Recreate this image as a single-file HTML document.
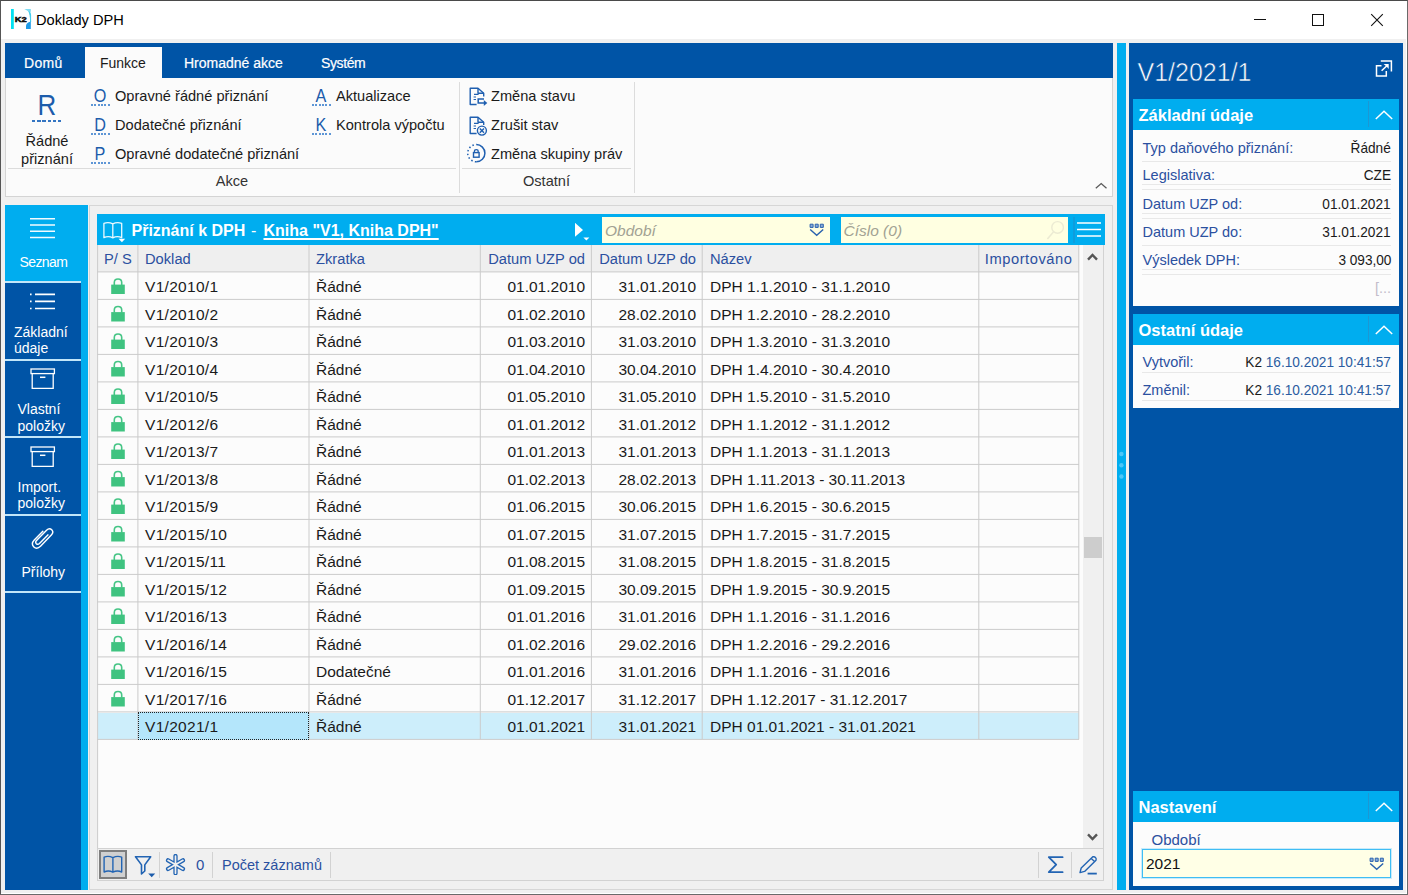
<!DOCTYPE html>
<html lang="cs">
<head>
<meta charset="utf-8">
<title>Doklady DPH</title>
<style>
*{box-sizing:border-box;margin:0;padding:0}
html,body{width:1408px;height:895px;overflow:hidden;background:#f0f0f0}
body{font-family:"Liberation Sans",sans-serif;font-size:15px;color:#1a1a1a;position:relative}
.a{position:absolute}
.t{position:absolute;white-space:nowrap;line-height:20px;height:20px}
.rt{text-align:right}
.ct{text-align:center}
#win{position:absolute;left:0;top:0;width:1408px;height:895px;background:#f0f0f0;border-left:1px solid #555;border-top:1px solid #4a4a4a;border-right:1px solid #6a6a6a;border-bottom:1px solid #6a6a6a;box-shadow:inset -1px -1px 0 #fff}
#titlebar{position:absolute;left:1px;top:1px;width:1406px;height:38px;background:#fff}
#tabbar{position:absolute;left:5px;top:43px;width:1108px;height:35px;background:#0054a6}
#tabact{position:absolute;left:85px;top:47px;width:77px;height:31px;background:#fbfbfb}
#ribbon{position:absolute;left:5px;top:78px;width:1108px;height:119px;background:#fbfbfb;border:1px solid #d4d4d4;border-top:none}
.tab{color:#fff;font-size:14px;-webkit-text-stroke:.2px #fff}
.rb{font-size:14.6px;color:#1a1a1a}
.rk{font-size:18px;color:#1c5cab;transform:scaleX(.9)}
.dots{position:absolute;height:2px;background-image:repeating-linear-gradient(90deg,#5e96d6 0 2.100px,transparent 2.100px 3.320px)}
#nav{position:absolute;left:5px;top:205px;width:83px;height:685px;background:#00adef}
.nb{position:absolute;left:5px;width:76px;background:#0054a6}
.nd{position:absolute;left:5px;width:76px;height:2px;background:#c2e6f9}
.nt{position:absolute;color:#fff;font-size:14px;line-height:16px;white-space:nowrap}
#main{position:absolute;left:89px;top:205px;width:1024px;height:685px;background:#f0f0f0;border:1px solid #d6d6d6}
#ghead{position:absolute;left:97px;top:214px;width:1008px;height:31px;background:#00adef}
#gcols{position:absolute;left:97px;top:245px;width:982px;height:27px;background:#efefef}
#gbody{position:absolute;left:97px;top:272px;width:986px;height:576px;background:#fcfcfc}
.vl{position:absolute;width:1px;background:#d6d6d6}
.hl{position:absolute;height:1px;background:#d6d6d6;left:97px;width:982px}
.ch{font-size:14.7px;color:#2b50a0}
.c{font-size:15.5px;color:#1a1a1a;z-index:4}
#rp{position:absolute;left:1129px;top:43px;width:274px;height:847px;background:#0054a6}
.sh{position:absolute;left:1133px;width:266px;height:31px;background:#00adef}
.sb{position:absolute;left:1133px;width:266px;background:#fcfcfc}
.sht{color:#fff;font-weight:bold;font-size:16.5px}
.lbl{font-size:14.5px;color:#2b50a0}
.val{font-size:14.5px;color:#1a1a1a;transform:scaleX(.94);transform-origin:100% 50%}
.rl{position:absolute;left:1142px;width:249px;height:1px;background:#e8e8e8}
.hs{position:absolute;width:1px;height:26px;background:#1c97d4}
</style>
</head>
<body>
<div id="win"></div><div id="titlebar"></div>
<svg class="a" style="left:11px;top:9px" width="21" height="21" viewBox="0 0 21 21">
<rect x="0" y="0" width="2.800" height="20" fill="#03e0f1"/>
<path d="M13.400 0 H19.800 V3 Q17 2.600 13.400 0Z" fill="#7fdcf3"/>
<path d="M17.800 2.200 Q19.600 3.400 19.600 6 V13 Q19.600 9 19 6.500 Q18.600 4 17.800 2.200Z" fill="#35c9ec" stroke="#35c9ec" stroke-width=".8"/>
<path d="M19.800 12.500 V20 H15 V17 Q15 13.800 19.800 12.500Z" fill="#1f9be8"/>
<text x="3.700" y="12.600" font-family="Liberation Sans" font-weight="bold" font-size="7.800" fill="#0a0a0a" stroke="#0a0a0a" stroke-width=".5" textLength="12" lengthAdjust="spacingAndGlyphs">K2</text>
</svg>
<div class="t " style="left:36.4px;top:10px;font-size:15px;color:#000;transform:scaleX(.975);transform-origin:0 50%">Doklady DPH</div>
<div class="a" style="left:1254px;top:19px;width:12px;height:1px;background:#111"></div>
<div class="a" style="left:1312px;top:14px;width:12px;height:12px;border:1px solid #111"></div>
<svg class="a" style="left:1370px;top:13px" width="14" height="14" viewBox="0 0 14 14"><path d="M1.200 1.200 L12.800 12.800 M12.800 1.200 L1.200 12.800" stroke="#111" stroke-width="1.1" fill="none"/></svg>
<div id="tabbar"></div><div id="tabact"></div><div id="ribbon"></div>
<div class="t tab" style="left:24px;top:53px;letter-spacing:.3px">Domů</div>
<div class="t tab" style="left:100px;top:53px;color:#1a1a1a;-webkit-text-stroke:0">Funkce</div>
<div class="t tab" style="left:184px;top:53px;">Hromadné akce</div>
<div class="t tab" style="left:321px;top:53px;letter-spacing:-.4px">Systém</div>
<div class="t " style="left:22px;top:90px;left:0;width:94px;text-align:center;font-size:29.5px;color:#1c5cab;line-height:30px;height:30px;transform:scaleX(.88)">R</div>
<div class="dots" style="left:32px;top:120px;width:30px;background-image:repeating-linear-gradient(90deg,#3475c2 0 3.500px,transparent 3.500px 5.200px)"></div>
<div class="t rb ct" style="left:0px;top:130.5px;width:94px">Řádné</div>
<div class="t rb ct" style="left:0px;top:148.5px;width:94px">přiznání</div>
<div class="t rk ct" style="left:91px;top:86px;width:18px">O</div>
<div class="dots" style="left:91px;top:104px;width:18.700px"></div>
<div class="t rb" style="left:115px;top:86px;">Opravné řádné přiznání</div>
<div class="t rk ct" style="left:91px;top:115px;width:18px">D</div>
<div class="dots" style="left:91px;top:133px;width:18.700px"></div>
<div class="t rb" style="left:115px;top:115px;">Dodatečné přiznání</div>
<div class="t rk ct" style="left:91px;top:143.5px;width:18px">P</div>
<div class="dots" style="left:91px;top:162px;width:18.700px"></div>
<div class="t rb" style="left:115px;top:143.5px;">Opravné dodatečné přiznání</div>
<div class="t rk ct" style="left:312px;top:86px;width:18px">A</div>
<div class="dots" style="left:312px;top:104px;width:18.700px"></div>
<div class="t rb" style="left:336px;top:86px;">Aktualizace</div>
<div class="t rk ct" style="left:312px;top:115px;width:18px">K</div>
<div class="dots" style="left:312px;top:133px;width:18.700px"></div>
<div class="t rb" style="left:336px;top:115px;">Kontrola výpočtu</div>
<div class="t rb" style="left:491px;top:86px;">Změna stavu</div>
<div class="t rb" style="left:491px;top:115px;">Zrušit stav</div>
<div class="t rb" style="left:491px;top:143.5px;">Změna skupiny práv</div>
<svg class="a" style="left:468px;top:86px" width="21" height="22" viewBox="0 0 21 22"><g stroke="#1f5fb0" stroke-width="1.400" fill="none" stroke-linejoin="round"><path d="M8.600 18.500 H2.200 V2.200 H10 L15.700 7.200 V10.500"/><path d="M10 2.200 V7.200 H15.700"/><path d="M6 8.400 H10.600 M5.600 11 H8 M5.600 13.500 H8" stroke-width="1.200"/></g><path d="M16 13 H10.200 V17 H16.500" stroke="#1f5fb0" stroke-width="1.500" fill="none"/><path d="M15.800 13.900 L19.300 17 L15.800 20.100Z" fill="#1f5fb0"/></svg>
<svg class="a" style="left:468px;top:114.500px" width="21" height="22" viewBox="0 0 21 22"><g stroke="#1f5fb0" stroke-width="1.400" fill="none" stroke-linejoin="round"><path d="M8.600 18.500 H2.200 V2.200 H10 L15.700 7.200 V10"/><path d="M10 2.200 V7.200 H15.700"/><path d="M6 8.400 H10.600 M5.600 11 H8 M5.600 13.500 H8" stroke-width="1.200"/></g><circle cx="13.900" cy="15.600" r="4.500" stroke="#1f5fb0" stroke-width="1.400" fill="#fbfbfb"/><path d="M11.800 13.500 L16 17.700 M16 13.500 L11.800 17.700" stroke="#1f5fb0" stroke-width="1.400"/></svg>
<svg class="a" style="left:466px;top:143px" width="21" height="21" viewBox="0 0 21 21"><path d="M10.300 1.600 A8.600 8.600 0 0 1 10.300 18.800" stroke="#1f5fb0" stroke-width="1.500" fill="none"/><path d="M10.300 18.800 A8.600 8.600 0 0 1 10.300 1.600" stroke="#1f5fb0" stroke-width="1.500" fill="none" stroke-dasharray="1.500 2.300"/><path d="M8.400 9.600 V8.400 Q8.400 6.600 10.300 6.600 Q12.200 6.600 12.200 8.400 V9.600" stroke="#1f5fb0" stroke-width="1.300" fill="none"/><rect x="7.500" y="9.600" width="5.600" height="4.600" stroke="#1f5fb0" stroke-width="1.400" fill="none"/></svg>
<div class="a" style="left:8px;top:168px;width:448px;height:1px;background:#dcdcdc"></div>
<div class="a" style="left:462px;top:168px;width:169px;height:1px;background:#dcdcdc"></div>
<div class="a" style="left:459px;top:82px;width:1px;height:111px;background:#dcdcdc"></div>
<div class="a" style="left:634px;top:82px;width:1px;height:111px;background:#dcdcdc"></div>
<div class="t rb ct" style="left:8px;top:171px;width:448px;color:#333">Akce</div>
<div class="t rb ct" style="left:462px;top:171px;width:169px;color:#333">Ostatní</div>
<svg class="a" style="left:1094px;top:181px" width="14" height="9" viewBox="0 0 14 9"><path d="M1.800 7.200 L7.200 2.500 L12.500 7.200" stroke="#5a5a5a" stroke-width="1.300" fill="none"/></svg>
<div id="nav"></div>
<div class="nb" style="top:283px;height:607px"></div>
<div class="nd" style="top:281px"></div>
<div class="nd" style="top:359px"></div>
<div class="nd" style="top:436px"></div>
<div class="nd" style="top:514px"></div>
<div class="nd" style="top:591px"></div>
<svg class="a" style="left:29px;top:216px" width="28" height="24" viewBox="0 0 28 24"><path d="M1 2.800H26M1 9H26M1 15.300H26M1 21.500H26" stroke="#f2fbff" stroke-width="1.400" fill="none"/></svg>
<svg class="a" style="left:29px;top:291px" width="28" height="20" viewBox="0 0 28 20"><path d="M6 3.4H26M6 10.4H26M6 17.5H26" stroke="#fff" stroke-width="1.6" fill="none"/><path d="M1 3.4H2.6M1 10.4H2.6M1 17.5H2.6" stroke="#fff" stroke-width="1.6"/></svg>
<svg class="a" style="left:30px;top:368px" width="26" height="22" viewBox="0 0 26 22"><rect x="1" y="1" width="23.4" height="4.6" stroke="#fff" stroke-width="1.3" fill="none"/><path d="M2.2 5.6V20.3H23.2V5.6" stroke="#fff" stroke-width="1.3" fill="none"/><path d="M10 9.3H15.4" stroke="#fff" stroke-width="1.5"/></svg>
<svg class="a" style="left:30px;top:446px" width="26" height="22" viewBox="0 0 26 22"><rect x="1" y="1" width="23.4" height="4.6" stroke="#fff" stroke-width="1.3" fill="none"/><path d="M2.2 5.6V20.3H23.2V5.6" stroke="#fff" stroke-width="1.3" fill="none"/><path d="M10 9.3H15.4" stroke="#fff" stroke-width="1.5"/></svg>
<svg class="a" style="left:30.500px;top:524.500px" width="23.500" height="26.500" viewBox="0 0 23 25"><path d="M16.5 9.2 L8.3 17.6 Q6.6 19.2 5.2 17.8 Q3.9 16.4 5.4 14.8 L15.2 4.6 Q18 1.9 20.3 4.2 Q22.6 6.6 19.9 9.4 L9.3 20.4 Q5.6 23.9 2.6 20.8 Q-0.2 17.8 3.2 14.2 L11.6 5.6" stroke="#fff" stroke-width="1.4" fill="none" stroke-linecap="round"/></svg>
<div class="nt" style="left:19.500px;top:254px;letter-spacing:-.6px">Seznam</div>
<div class="nt" style="left:14px;top:324px">Základní</div>
<div class="nt" style="left:14px;top:340px">údaje</div>
<div class="nt" style="left:17.5px;top:401px">Vlastní</div>
<div class="nt" style="left:17.5px;top:418px">položky</div>
<div class="nt" style="left:17.5px;top:479px">Import.</div>
<div class="nt" style="left:17.5px;top:495px">položky</div>
<div class="nt" style="left:21.5px;top:564px">Přílohy</div>
<div id="main"></div><div id="ghead"></div><div id="gcols"></div><div id="gbody"></div>
<svg class="a" style="left:102px;top:221px" width="25" height="23" viewBox="0 0 25 23"><path d="M10.800 2.900 Q6.400 0.500 1.900 2.400 V16.700 Q6.400 14.600 10.800 16.900 Q15.200 14.600 19.700 16.700 V2.400 Q15.200 0.500 10.800 2.900 V17.300" stroke="#fff" stroke-opacity=".92" stroke-width="1.300" fill="none" stroke-linejoin="round"/><path d="M16.600 17.800 H23.200 L19.900 21.300Z" fill="#fff"/></svg>
<div class="t " style="left:131.5px;top:221px;font-weight:bold;font-size:16px;color:#fff">Přiznání k DPH</div>
<div class="t " style="left:251px;top:221px;font-size:16px;color:#fff">-</div>
<div class="t " style="left:263.5px;top:221px;font-weight:bold;font-size:16px;color:#fff;text-decoration:underline;text-underline-offset:2px;text-decoration-thickness:1.5px">Kniha "V1, Kniha DPH"</div>
<svg class="a" style="left:574px;top:223px" width="17" height="19" viewBox="0 0 17 19"><path d="M1 -0.200 L9 7 L1 13.700Z" fill="#fff"/><path d="M9.4 14.4 H15.4 L12.4 17.6Z" fill="#fff"/></svg>
<div class="a" style="left:602px;top:217px;width:228px;height:26px;background:#ffffe1"></div>
<div class="a" style="left:841px;top:217px;width:227px;height:26px;background:#ffffe1"></div>
<div class="t " style="left:605px;top:221px;font-style:italic;font-size:15.5px;color:#a2a293">Období</div>
<div class="t " style="left:843.5px;top:221px;font-style:italic;font-size:15.5px;color:#a2a293">Číslo (0)</div>
<svg class="a" style="left:809px;top:223px" width="16" height="14" viewBox="0 0 16 14"><path d="M1.100 1.200H4.100V4.400H1.100ZM6.200 1.200H9.200V4.400H6.200ZM11.300 1.200H14.300V4.400H11.300Z" fill="#8badd8" stroke="#2a62ae" stroke-width="1"/><path d="M1.200 6.400 L7.700 12.300 L14.200 6.400" stroke="#2a62ae" stroke-width="1.400" fill="none"/></svg>
<svg class="a" style="left:1046px;top:220px" width="19" height="21" viewBox="0 0 19 21"><circle cx="11.6" cy="7.4" r="5.8" stroke="#ecebd3" stroke-width="1.4" fill="none"/><path d="M7.6 11.8 L1.4 19" stroke="#ecebd3" stroke-width="1.6"/></svg>
<div class="a" style="left:1073px;top:217px;width:1.500px;height:26px;background:#0f9ddd"></div>
<svg class="a" style="left:1076px;top:220px" width="26" height="19" viewBox="0 0 26 19"><path d="M1 3H25M1 9.5H25M1 16H25" stroke="#fff" stroke-width="1.7"/></svg>
<div class="t ch" style="left:104px;top:249px;">P/ S</div>
<div class="t ch" style="left:145px;top:249px;">Doklad</div>
<div class="t ch" style="left:316px;top:249px;">Zkratka</div>
<div class="t ch" style="right:823px;top:249px;">Datum UZP od</div>
<div class="t ch" style="right:712px;top:249px;">Datum UZP do</div>
<div class="t ch" style="left:710px;top:249px;">Název</div>
<div class="t ch" style="right:335.5px;top:249px;"><span style="letter-spacing:.55px">Importováno</span></div>
<div class="a" style="left:98px;top:713px;width:981px;height:26px;background:#cdeefb"></div>
<div class="a" style="left:138px;top:712px;width:171px;height:28px;background:#b4e6fb;border:1px dotted #222;z-index:3"></div>
<svg class="a" style="left:0;top:0;z-index:2" width="1110" height="860" viewBox="0 0 1110 860"><g fill="#cbcbcb"><rect x="97" y="271.40" width="982" height="1"/><rect x="97" y="298.90" width="982" height="1"/><rect x="97" y="326.40" width="982" height="1"/><rect x="97" y="353.90" width="982" height="1"/><rect x="97" y="381.40" width="982" height="1"/><rect x="97" y="408.90" width="982" height="1"/><rect x="97" y="436.40" width="982" height="1"/><rect x="97" y="463.90" width="982" height="1"/><rect x="97" y="491.40" width="982" height="1"/><rect x="97" y="518.90" width="982" height="1"/><rect x="97" y="546.40" width="982" height="1"/><rect x="97" y="573.90" width="982" height="1"/><rect x="97" y="601.40" width="982" height="1"/><rect x="97" y="628.90" width="982" height="1"/><rect x="97" y="656.40" width="982" height="1"/><rect x="97" y="683.90" width="982" height="1"/><rect x="97" y="711.40" width="982" height="1"/><rect x="97" y="738.90" width="982" height="1"/><rect x="137.40" y="245" width="1" height="494.40"/><rect x="308.50" y="245" width="1" height="494.40"/><rect x="479.80" y="245" width="1" height="494.40"/><rect x="590.90" y="245" width="1" height="494.40"/><rect x="701.70" y="245" width="1" height="494.40"/><rect x="978.30" y="245" width="1" height="494.40"/><rect x="1078.30" y="245" width="1" height="494.40"/><rect x="97.1" y="245" width="1" height="603"/></g><g transform="translate(110 277.00)"><path d="M4.300 8 V5.600 Q4.300 2 8 2 Q11.700 2 11.700 5.600 V8" stroke="#45c585" stroke-width="1.600" fill="none"/><rect x="1.200" y="7.600" width="13.600" height="9.400" fill="#3fc380"/></g><g transform="translate(110 304.50)"><path d="M4.300 8 V5.600 Q4.300 2 8 2 Q11.700 2 11.700 5.600 V8" stroke="#45c585" stroke-width="1.600" fill="none"/><rect x="1.200" y="7.600" width="13.600" height="9.400" fill="#3fc380"/></g><g transform="translate(110 332.00)"><path d="M4.300 8 V5.600 Q4.300 2 8 2 Q11.700 2 11.700 5.600 V8" stroke="#45c585" stroke-width="1.600" fill="none"/><rect x="1.200" y="7.600" width="13.600" height="9.400" fill="#3fc380"/></g><g transform="translate(110 359.50)"><path d="M4.300 8 V5.600 Q4.300 2 8 2 Q11.700 2 11.700 5.600 V8" stroke="#45c585" stroke-width="1.600" fill="none"/><rect x="1.200" y="7.600" width="13.600" height="9.400" fill="#3fc380"/></g><g transform="translate(110 387.00)"><path d="M4.300 8 V5.600 Q4.300 2 8 2 Q11.700 2 11.700 5.600 V8" stroke="#45c585" stroke-width="1.600" fill="none"/><rect x="1.200" y="7.600" width="13.600" height="9.400" fill="#3fc380"/></g><g transform="translate(110 414.50)"><path d="M4.300 8 V5.600 Q4.300 2 8 2 Q11.700 2 11.700 5.600 V8" stroke="#45c585" stroke-width="1.600" fill="none"/><rect x="1.200" y="7.600" width="13.600" height="9.400" fill="#3fc380"/></g><g transform="translate(110 442.00)"><path d="M4.300 8 V5.600 Q4.300 2 8 2 Q11.700 2 11.700 5.600 V8" stroke="#45c585" stroke-width="1.600" fill="none"/><rect x="1.200" y="7.600" width="13.600" height="9.400" fill="#3fc380"/></g><g transform="translate(110 469.50)"><path d="M4.300 8 V5.600 Q4.300 2 8 2 Q11.700 2 11.700 5.600 V8" stroke="#45c585" stroke-width="1.600" fill="none"/><rect x="1.200" y="7.600" width="13.600" height="9.400" fill="#3fc380"/></g><g transform="translate(110 497.00)"><path d="M4.300 8 V5.600 Q4.300 2 8 2 Q11.700 2 11.700 5.600 V8" stroke="#45c585" stroke-width="1.600" fill="none"/><rect x="1.200" y="7.600" width="13.600" height="9.400" fill="#3fc380"/></g><g transform="translate(110 524.50)"><path d="M4.300 8 V5.600 Q4.300 2 8 2 Q11.700 2 11.700 5.600 V8" stroke="#45c585" stroke-width="1.600" fill="none"/><rect x="1.200" y="7.600" width="13.600" height="9.400" fill="#3fc380"/></g><g transform="translate(110 552.00)"><path d="M4.300 8 V5.600 Q4.300 2 8 2 Q11.700 2 11.700 5.600 V8" stroke="#45c585" stroke-width="1.600" fill="none"/><rect x="1.200" y="7.600" width="13.600" height="9.400" fill="#3fc380"/></g><g transform="translate(110 579.50)"><path d="M4.300 8 V5.600 Q4.300 2 8 2 Q11.700 2 11.700 5.600 V8" stroke="#45c585" stroke-width="1.600" fill="none"/><rect x="1.200" y="7.600" width="13.600" height="9.400" fill="#3fc380"/></g><g transform="translate(110 607.00)"><path d="M4.300 8 V5.600 Q4.300 2 8 2 Q11.700 2 11.700 5.600 V8" stroke="#45c585" stroke-width="1.600" fill="none"/><rect x="1.200" y="7.600" width="13.600" height="9.400" fill="#3fc380"/></g><g transform="translate(110 634.50)"><path d="M4.300 8 V5.600 Q4.300 2 8 2 Q11.700 2 11.700 5.600 V8" stroke="#45c585" stroke-width="1.600" fill="none"/><rect x="1.200" y="7.600" width="13.600" height="9.400" fill="#3fc380"/></g><g transform="translate(110 662.00)"><path d="M4.300 8 V5.600 Q4.300 2 8 2 Q11.700 2 11.700 5.600 V8" stroke="#45c585" stroke-width="1.600" fill="none"/><rect x="1.200" y="7.600" width="13.600" height="9.400" fill="#3fc380"/></g><g transform="translate(110 689.50)"><path d="M4.300 8 V5.600 Q4.300 2 8 2 Q11.700 2 11.700 5.600 V8" stroke="#45c585" stroke-width="1.600" fill="none"/><rect x="1.200" y="7.600" width="13.600" height="9.400" fill="#3fc380"/></g></svg>
<div class="t c" style="left:145px;top:277px;letter-spacing:.3px">V1/2010/1</div>
<div class="t c" style="left:316px;top:277px;">Řádné</div>
<div class="t c" style="right:823px;top:277px;">01.01.2010</div>
<div class="t c" style="right:712px;top:277px;">31.01.2010</div>
<div class="t c" style="left:710px;top:277px;">DPH 1.1.2010 - 31.1.2010</div>
<div class="t c" style="left:145px;top:305px;letter-spacing:.3px">V1/2010/2</div>
<div class="t c" style="left:316px;top:305px;">Řádné</div>
<div class="t c" style="right:823px;top:305px;">01.02.2010</div>
<div class="t c" style="right:712px;top:305px;">28.02.2010</div>
<div class="t c" style="left:710px;top:305px;">DPH 1.2.2010 - 28.2.2010</div>
<div class="t c" style="left:145px;top:332px;letter-spacing:.3px">V1/2010/3</div>
<div class="t c" style="left:316px;top:332px;">Řádné</div>
<div class="t c" style="right:823px;top:332px;">01.03.2010</div>
<div class="t c" style="right:712px;top:332px;">31.03.2010</div>
<div class="t c" style="left:710px;top:332px;">DPH 1.3.2010 - 31.3.2010</div>
<div class="t c" style="left:145px;top:360px;letter-spacing:.3px">V1/2010/4</div>
<div class="t c" style="left:316px;top:360px;">Řádné</div>
<div class="t c" style="right:823px;top:360px;">01.04.2010</div>
<div class="t c" style="right:712px;top:360px;">30.04.2010</div>
<div class="t c" style="left:710px;top:360px;">DPH 1.4.2010 - 30.4.2010</div>
<div class="t c" style="left:145px;top:387px;letter-spacing:.3px">V1/2010/5</div>
<div class="t c" style="left:316px;top:387px;">Řádné</div>
<div class="t c" style="right:823px;top:387px;">01.05.2010</div>
<div class="t c" style="right:712px;top:387px;">31.05.2010</div>
<div class="t c" style="left:710px;top:387px;">DPH 1.5.2010 - 31.5.2010</div>
<div class="t c" style="left:145px;top:415px;letter-spacing:.3px">V1/2012/6</div>
<div class="t c" style="left:316px;top:415px;">Řádné</div>
<div class="t c" style="right:823px;top:415px;">01.01.2012</div>
<div class="t c" style="right:712px;top:415px;">31.01.2012</div>
<div class="t c" style="left:710px;top:415px;">DPH 1.1.2012 - 31.1.2012</div>
<div class="t c" style="left:145px;top:442px;letter-spacing:.3px">V1/2013/7</div>
<div class="t c" style="left:316px;top:442px;">Řádné</div>
<div class="t c" style="right:823px;top:442px;">01.01.2013</div>
<div class="t c" style="right:712px;top:442px;">31.01.2013</div>
<div class="t c" style="left:710px;top:442px;">DPH 1.1.2013 - 31.1.2013</div>
<div class="t c" style="left:145px;top:470px;letter-spacing:.3px">V1/2013/8</div>
<div class="t c" style="left:316px;top:470px;">Řádné</div>
<div class="t c" style="right:823px;top:470px;">01.02.2013</div>
<div class="t c" style="right:712px;top:470px;">28.02.2013</div>
<div class="t c" style="left:710px;top:470px;">DPH 1.11.2013 - 30.11.2013</div>
<div class="t c" style="left:145px;top:497px;letter-spacing:.3px">V1/2015/9</div>
<div class="t c" style="left:316px;top:497px;">Řádné</div>
<div class="t c" style="right:823px;top:497px;">01.06.2015</div>
<div class="t c" style="right:712px;top:497px;">30.06.2015</div>
<div class="t c" style="left:710px;top:497px;">DPH 1.6.2015 - 30.6.2015</div>
<div class="t c" style="left:145px;top:525px;letter-spacing:.3px">V1/2015/10</div>
<div class="t c" style="left:316px;top:525px;">Řádné</div>
<div class="t c" style="right:823px;top:525px;">01.07.2015</div>
<div class="t c" style="right:712px;top:525px;">31.07.2015</div>
<div class="t c" style="left:710px;top:525px;">DPH 1.7.2015 - 31.7.2015</div>
<div class="t c" style="left:145px;top:552px;letter-spacing:.3px">V1/2015/11</div>
<div class="t c" style="left:316px;top:552px;">Řádné</div>
<div class="t c" style="right:823px;top:552px;">01.08.2015</div>
<div class="t c" style="right:712px;top:552px;">31.08.2015</div>
<div class="t c" style="left:710px;top:552px;">DPH 1.8.2015 - 31.8.2015</div>
<div class="t c" style="left:145px;top:580px;letter-spacing:.3px">V1/2015/12</div>
<div class="t c" style="left:316px;top:580px;">Řádné</div>
<div class="t c" style="right:823px;top:580px;">01.09.2015</div>
<div class="t c" style="right:712px;top:580px;">30.09.2015</div>
<div class="t c" style="left:710px;top:580px;">DPH 1.9.2015 - 30.9.2015</div>
<div class="t c" style="left:145px;top:607px;letter-spacing:.3px">V1/2016/13</div>
<div class="t c" style="left:316px;top:607px;">Řádné</div>
<div class="t c" style="right:823px;top:607px;">01.01.2016</div>
<div class="t c" style="right:712px;top:607px;">31.01.2016</div>
<div class="t c" style="left:710px;top:607px;">DPH 1.1.2016 - 31.1.2016</div>
<div class="t c" style="left:145px;top:635px;letter-spacing:.3px">V1/2016/14</div>
<div class="t c" style="left:316px;top:635px;">Řádné</div>
<div class="t c" style="right:823px;top:635px;">01.02.2016</div>
<div class="t c" style="right:712px;top:635px;">29.02.2016</div>
<div class="t c" style="left:710px;top:635px;">DPH 1.2.2016 - 29.2.2016</div>
<div class="t c" style="left:145px;top:662px;letter-spacing:.3px">V1/2016/15</div>
<div class="t c" style="left:316px;top:662px;">Dodatečné</div>
<div class="t c" style="right:823px;top:662px;">01.01.2016</div>
<div class="t c" style="right:712px;top:662px;">31.01.2016</div>
<div class="t c" style="left:710px;top:662px;">DPH 1.1.2016 - 31.1.2016</div>
<div class="t c" style="left:145px;top:690px;letter-spacing:.3px">V1/2017/16</div>
<div class="t c" style="left:316px;top:690px;">Řádné</div>
<div class="t c" style="right:823px;top:690px;">01.12.2017</div>
<div class="t c" style="right:712px;top:690px;">31.12.2017</div>
<div class="t c" style="left:710px;top:690px;">DPH 1.12.2017 - 31.12.2017</div>
<div class="t c" style="left:145px;top:717px;letter-spacing:.3px">V1/2021/1</div>
<div class="t c" style="left:316px;top:717px;">Řádné</div>
<div class="t c" style="right:823px;top:717px;">01.01.2021</div>
<div class="t c" style="right:712px;top:717px;">31.01.2021</div>
<div class="t c" style="left:710px;top:717px;">DPH 01.01.2021 - 31.01.2021</div>
<div class="a" style="left:1079px;top:245px;width:4px;height:603px;background:#fcfcfc"></div>
<div class="a" style="left:1083px;top:245px;width:20px;height:603px;background:#f0f0f0"></div>
<div class="a" style="left:1103px;top:245px;width:1px;height:636px;background:#d2d2d2"></div>
<div class="a" style="left:1084px;top:537px;width:18px;height:21px;background:#cdcdcd"></div>
<svg class="a" style="left:1086px;top:252px" width="13" height="10" viewBox="0 0 13 10"><path d="M2 7.600 L6.500 3 L11 7.600" stroke="#555" stroke-width="2.400" fill="none"/></svg>
<svg class="a" style="left:1086px;top:832px" width="13" height="10" viewBox="0 0 13 10"><path d="M2 2.400 L6.500 7 L11 2.400" stroke="#555" stroke-width="2.400" fill="none"/></svg>
<div class="a" style="left:97px;top:848px;width:1007px;height:33px;background:#f0f0f0;border:1px solid #d2d2d2"></div>
<div class="a" style="left:99px;top:850px;width:28px;height:29px;background:#d0d0d0;border:2px solid #7e7e7e"></div>
<svg class="a" style="left:102px;top:855px" width="22" height="20" viewBox="0 0 22 20"><path d="M10.900 2.700 Q6.500 0.300 2.100 2.100 V17 Q6.500 15 10.900 17.200 Q15.300 15 19.700 17 V2.100 Q15.300 0.300 10.900 2.700 V17.800" stroke="#2264b3" stroke-width="1.400" fill="none" stroke-linejoin="round"/></svg>
<svg class="a" style="left:134px;top:854px" width="24" height="25" viewBox="0 0 24 25"><path d="M1.500 2.700 H16.700 L10.800 10.900 V17 L7.500 20 V10.900Z" stroke="#2264b3" stroke-width="1.600" fill="none" stroke-linejoin="round"/><path d="M14.200 19.500 H21.200 L17.700 23.300Z" fill="#1c5cab"/></svg>
<div class="a" style="left:159px;top:852px;width:1px;height:26px;background:#d2d2d2"></div>
<div class="a" style="left:212px;top:852px;width:1px;height:26px;background:#d2d2d2"></div>
<div class="a" style="left:330px;top:852px;width:1px;height:26px;background:#d2d2d2"></div>
<div class="a" style="left:1038px;top:852px;width:1px;height:26px;background:#d2d2d2"></div>
<div class="a" style="left:1071px;top:852px;width:1px;height:26px;background:#d2d2d2"></div>
<svg class="a" style="left:165px;top:854px" width="21" height="21" viewBox="0 0 21 21"><path d="M10.50 2.00L10.50 19.20M3.05 6.30L17.95 14.90M17.95 6.30L3.05 14.90" stroke="#2264b3" stroke-width="4.300" stroke-linecap="round" fill="none"/><path d="M10.50 2.00L10.50 19.20M3.05 6.30L17.95 14.90M17.95 6.30L3.05 14.90" stroke="#f0f0f0" stroke-width="1.700" stroke-linecap="round" fill="none"/></svg>
<div class="t " style="left:196px;top:855px;font-size:15px;color:#2b50a0">0</div>
<div class="t " style="left:222px;top:855px;font-size:14.5px;color:#2b50a0">Počet záznamů</div>
<svg class="a" style="left:1047px;top:855px" width="18" height="19" viewBox="0 0 18 19"><path d="M15.600 2.200 H1.800 L9.200 9.700 L1.800 17.200 H15.600" stroke="#2264b3" stroke-width="1.800" fill="none" stroke-linejoin="round" stroke-linecap="round"/></svg>
<svg class="a" style="left:1078px;top:855px" width="21" height="21" viewBox="0 0 21 21"><g stroke="#2264b3" stroke-width="1.400" fill="none" stroke-linejoin="round"><path d="M2 17.600 L3.200 13 L14.800 1.800 Q16.600 1.400 17.600 2.600 Q18.600 3.800 18 5.200 L6.600 16.400Z"/><path d="M13.200 3.400 L16.600 6.600"/><path d="M9.600 18.600 H18.800" stroke-width="1.800"/></g></svg>
<div class="a" style="left:1117px;top:43px;width:9px;height:847px;background:#00adef"></div>
<svg class="a" style="left:1117px;top:448px" width="9" height="34" viewBox="0 0 9 34"><g fill="#4cc7f9"><circle cx="4.400" cy="6" r="2.200"/><circle cx="4.400" cy="17.300" r="2.200"/><circle cx="4.400" cy="28.500" r="2.200"/></g></svg>
<div id="rp"></div>
<div class="t " style="left:1137.5px;top:57.5px;font-size:25px;color:#fff;line-height:28px;height:28px;-webkit-text-stroke:.55px #0054a6">V1/2021/1</div>
<svg class="a" style="left:1374px;top:59px" width="20" height="20" viewBox="0 0 20 20"><g stroke="#fff" stroke-width="1.500" fill="none"><path d="M6.800 1.900 H17.400 V12.500"/><path d="M7.500 6.800 H2.500 V17 H12.300 V12"/><path d="M7.600 11.800 L13.400 6.200"/></g><path d="M9.600 5 H14.700 V10.100 L12.600 7.600Z" fill="#fff"/></svg>
<div class="sh" style="top:99px"></div>
<div class="sb" style="top:130px;height:176px"></div>
<div class="t sht" style="left:1138.5px;top:105px;">Základní údaje</div>
<div class="hs" style="left:1368px;top:101px"></div>
<svg class="a" style="left:1374px;top:109px" width="20" height="12" viewBox="0 0 20 12"><path d="M1.800 10 L10 2.200 L18.200 10" stroke="#fff" stroke-width="1.500" fill="none"/></svg>
<div class="t lbl" style="left:1142.5px;top:138px;">Typ daňového přiznání:</div>
<div class="t val" style="right:17px;top:138px;">Řádné</div>
<div class="rl" style="top:161px"></div>
<div class="t lbl" style="left:1142.5px;top:165px;">Legislativa:</div>
<div class="t val" style="right:17px;top:165px;">CZE</div>
<div class="rl" style="top:184px"></div>
<div class="rl" style="top:189px"></div>
<div class="t lbl" style="left:1142.5px;top:194px;">Datum UZP od:</div>
<div class="t val" style="right:17px;top:194px;">01.01.2021</div>
<div class="rl" style="top:213px"></div>
<div class="rl" style="top:218px"></div>
<div class="t lbl" style="left:1142.5px;top:222px;">Datum UZP do:</div>
<div class="t val" style="right:17px;top:222px;">31.01.2021</div>
<div class="rl" style="top:245px"></div>
<div class="t lbl" style="left:1142.5px;top:250px;">Výsledek DPH:</div>
<div class="t val" style="right:17px;top:250px;">3 093,00</div>
<div class="rl" style="top:269px"></div>
<div class="rl" style="top:274px"></div>
<div class="t " style="right:17px;top:278px;font-size:14.5px;color:#c3bccb">[...</div>
<div class="sh" style="top:314px"></div>
<div class="sb" style="top:345px;height:63px"></div>
<div class="t sht" style="left:1138.5px;top:320px;">Ostatní údaje</div>
<div class="hs" style="left:1368px;top:316px"></div>
<svg class="a" style="left:1374px;top:324px" width="20" height="12" viewBox="0 0 20 12"><path d="M1.800 10 L10 2.200 L18.200 10" stroke="#fff" stroke-width="1.500" fill="none"/></svg>
<div class="t lbl" style="left:1142.5px;top:352px;">Vytvořil:</div>
<div class="t val" style="right:17px;top:352px;"><span style="color:#1a1a1a">K2</span> <span style="color:#2a5ba0">16.10.2021 10:41:57</span></div>
<div class="rl" style="top:372px"></div>
<div class="t lbl" style="left:1142.5px;top:380px;">Změnil:</div>
<div class="t val" style="right:17px;top:380px;"><span style="color:#1a1a1a">K2</span> <span style="color:#2a5ba0">16.10.2021 10:41:57</span></div>
<div class="rl" style="top:400px"></div>
<div class="sh" style="top:791px"></div>
<div class="sb" style="top:822px;height:64px"></div>
<div class="t sht" style="left:1138.5px;top:797px;">Nastavení</div>
<div class="hs" style="left:1368px;top:793px"></div>
<svg class="a" style="left:1374px;top:801px" width="20" height="12" viewBox="0 0 20 12"><path d="M1.800 10 L10 2.200 L18.200 10" stroke="#fff" stroke-width="1.500" fill="none"/></svg>
<div class="t lbl" style="left:1151.5px;top:830px;font-size:15px">Období</div>
<div class="a" style="left:1142px;top:849px;width:249px;height:29px;background:#ffffe6;border:1px solid #3fbdf4;box-shadow:0 0 0 1px rgba(63,189,244,.28)"></div>
<div class="t " style="left:1146px;top:854px;font-size:15.5px;color:#111">2021</div>
<svg class="a" style="left:1369px;top:857px" width="16" height="14" viewBox="0 0 16 14"><path d="M1.100 1.200H4.100V4.400H1.100ZM6.200 1.200H9.200V4.400H6.200ZM11.300 1.200H14.300V4.400H11.300Z" fill="#8badd8" stroke="#2a62ae" stroke-width="1"/><path d="M1.200 6.400 L7.700 12.300 L14.200 6.400" stroke="#2a62ae" stroke-width="1.400" fill="none"/></svg>
</body>
</html>
